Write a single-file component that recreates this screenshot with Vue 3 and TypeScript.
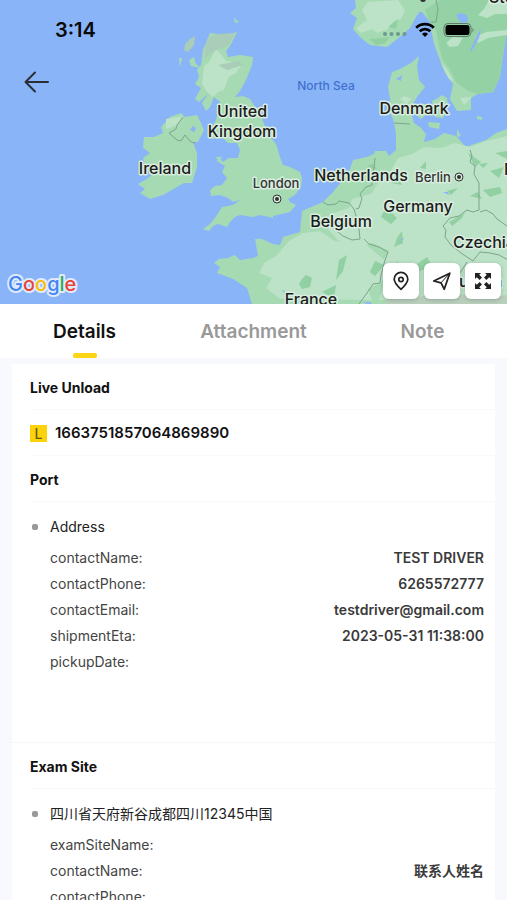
<script setup lang="ts">
import { ref } from 'vue'

interface Field {
  label: string
  value?: string
}
interface Stop {
  title: string
  address: string
  fields: Field[]
}
interface MapLabel {
  text: string
  x: number
  y: number
  kind?: string
}

const tabs = ['Details', 'Attachment', 'Note']
const active = ref('Details')

const stops: Stop[] = [
  {
    title: 'Port',
    address: 'Address',
    fields: [
      { label: 'contactName:', value: 'TEST DRIVER' },
      { label: 'contactPhone:', value: '6265572777' },
      { label: 'contactEmail:', value: 'testdriver@gmail.com' },
      { label: 'shipmentEta:', value: '2023-05-31 11:38:00' },
      { label: 'pickupDate:' },
    ],
  },
  {
    title: 'Exam Site',
    address: '四川省天府新谷成都四川12345中国',
    fields: [
      { label: 'examSiteName:' },
      { label: 'contactName:', value: '联系人姓名' },
      { label: 'contactPhone:' },
    ],
  },
]

const labels: MapLabel[] = [
  { text: 'United', x: 242, y: 117 },
  { text: 'Kingdom', x: 242, y: 137 },
  { text: 'Ireland', x: 165, y: 174 },
  { text: 'Denmark', x: 414, y: 114 },
  { text: 'Netherlands', x: 361, y: 181 },
  { text: 'Germany', x: 418, y: 212 },
  { text: 'Belgium', x: 341, y: 227 },
  { text: 'Czechia', x: 484, y: 248 },
  { text: 'France', x: 311, y: 305 },
  { text: 'Austria', x: 475, y: 287 },
  { text: 'Poland', x: 504, y: 175, kind: 'edge' },
  { text: 'Stockholm', x: 489, y: 3, kind: 'edge' },
  { text: 'London', x: 276, y: 188, kind: 'city' },
  { text: 'Berlin', x: 433, y: 182, kind: 'city' },
  { text: 'North Sea', x: 326, y: 90, kind: 'sea' },
]

const cities = [
  { x: 277, y: 199 },
  { x: 459, y: 177 },
]
</script>

<template>
  <main class="screen">
    <header class="map">
      <svg class="map-art" viewBox="0 0 507 304" preserveAspectRatio="xMidYMid slice" role="img" aria-label="Map">
        <rect width="507" height="304" fill="#8ab4f8" />
        <g fill="#a5dab3">
          <path d="M210 33L226 35L237 32L230 46L226 51L228 57L240 55L253 57L252 65L246 80L240 91L235 97L243 96L250 99L256 108L260 113L264 124L270 137L276 144L280 157L283 165L290 167L300 172L302 178L301 187L295 195L288 199L290 202L296 205L290 212L273 216L273 218L260 215L253 217L240 215L235 217L230 222L227 227L218 224L213 226L209 231L203 229L210 224L217 215L222 207L233 205L240 200L233 202L228 198L220 195L211 196L210 190L215 186L222 185L227 178L222 172L225 166L217 161L219 158L223 162L229 158L238 158L240 150L237 143L228 143L222 137L212 139L209 132L216 120L220 102L214 97L210 107L206 111L202 103L208 94L199 102L195 99L201 88L195 84L199 77L197 70L201 65L203 50Z" />
          <path d="M170 117L181 113L185 117L197 115L201 123L204 130L198 142L193 142L197 153L197 167L192 183L184 183L177 187L163 195L150 199L140 193L145 189L138 184L147 179L154 173L145 166L143 158L150 153L143 148L144 137L154 137L163 133L161 127Z" />
          <path d="M189 60L194 57L196 64L201 68L191 66ZM234 18L239 22L235 23ZM179 58L182 58L180 67ZM216 157L222 157L219 162Z" />
          <path d="M355 0L507 0L507 31L502 62L500 77L493 92L478 94L471 98L471 110L457 111L450 99L453 84L445 73L441 63L434 44L430 24L422 12L417 15L410 28L401 36L387 47L370 45L361 38L353 29L357 18L350 13L356 8Z" />
          <path d="M419 56L417 66L419 80L425 87L417 97L413 104L411 113L414 123L420 127L426 134L424 142L435 139L444 133L456 136L466 147L474 144L486 140L496 133L507 129V304H252L247 288L233 279L217 273L220 267L214 263L219 259L228 258L235 255L240 260L253 258L258 256L255 239L262 239L273 244L280 245L283 237L300 232L302 211L323 202L333 192L342 181L350 169L353 160L367 157L374 154L375 151L386 151L389 156L396 150L396 134L394 122L390 112L390 99L388 87L392 72L400 69L411 63Z" />
          <path d="M432 101L438 98L442 95L447 98L448 106L443 118L435 117ZM414 105L425 104L428 113L421 119L414 113ZM428 122L440 123L439 129L429 127ZM477 116L482 117L482 120L477 119ZM457 129L461 136L457 137Z" />
        </g>
        <g fill="#bce2c7">
          <path d="M204 66L209 62L216 49L221 54L226 61L233 62L241 66L236 73L229 77L224 90L218 92L213 97L207 92L202 84ZM166 119L183 116L177 125L166 129Z" />
          <path d="M368 2L398 0L405 10L401 19L393 22L388 29L377 33L372 29L361 33L356 28L367 20L362 10ZM404 96L412 99L406 104L400 99Z" />
          <path d="M398 158L412 154L424 147L441 148L455 143L470 147L486 141L507 136V300H379L385 280L378 268L389 251L372 243L352 248L338 240L325 226L330 214L349 208L352 199L371 194L378 183L390 172ZM289 241L303 233L320 231L335 241L364 243L387 262L382 282L368 289L372 300L280 299L266 288L272 278L259 273L265 262L276 256Z" />
        </g>
        <path d="M440 0L507 0L507 31L502 62L500 77L493 92L478 94L468 91L456 82L449 68L443 61L439 46L436 30L429 21L425 10L434 4Z" fill="#94d2a5" />
        <g fill="#bce2c7">
          <path d="M489 0L507 0V14L495 14L487 18L478 15L484 9ZM475 37L486 32L507 30V35L488 38L478 43ZM446 43L453 37L463 38L458 46L450 47ZM441 63L447 69L454 82L449 79Z" />
          <path d="M460 98L472 97L464 105Z" />
        </g>
        <g fill="#91d0a3">
          <path d="M369 39L390 37L385 43L376 45ZM388 27L398 19L396 29Z" />
          <path d="M302 279L306 275L312 278L310 287L302 289L299 284ZM375 261L384 265L375 276L370 272ZM384 211L390 211L397 218L391 224L381 217ZM397 238L402 231L403 243L394 247ZM420 168L426 161L426 169ZM479 164L488 163L483 168ZM449 222L465 213L461 219L452 226ZM468 153L481 162L475 167ZM483 190L500 187L502 193L490 197ZM336 280L339 260L347 255L343 271Z" />
          <path d="M495 153L507 151V159ZM490 171L504 167L499 178ZM391 183L399 180L402 185ZM366 168L372 163L377 169ZM447 191L458 188L451 195ZM417 264L427 257L433 267L419 271ZM470 196L478 192L482 199ZM464 270L482 276L480 284ZM386 283L398 260L396 284ZM322 292L336 285L334 298Z" />
        </g>
        <path d="M207 39L217 34L235 33L229 45L214 51L204 59ZM218 65L239 61L243 65L227 70ZM185 44L190 39L195 36L194 45L188 52L184 50Z" fill="#a9cdb8" />
        <path d="M386 300L392 296L399 295L419 297L447 291L480 299L507 295V304H385Z" fill="#b9cfbc" />
        <g fill="#8ab4f8">
          <path d="M190 130l3-4 3 2-2 4zM396 79l6-4-1 6zM470 50l8-17 3-4-2 9-8 14zM456 15l4-2 7 2 1 7-7 1zM503 79l4-12v8l-5 14zM443 192l5 0 1 3zM401 240l3-3-1 3zM363 302l7 0 2 2-5 0zM281 289l4 3 0 2zM418 12l4 0 8 10 3 8-8-4z" />
        </g>
        <g fill="none" stroke="#7da58b" stroke-width="1">
          <path d="M183 117l-6 8-1 4-7 4 8 7 4 1 4-6 6 7 4 1M436 0l2 9-2 13-5 0M394 123l16 1M375 158l-1 10 -2 17-6 2-6 7 2 4-3 10-3 1M323 202l5 3 8-1 3-3 10 2 5 6 2 7-2 4 5 9 1 10-8 1-9-4-10-8-3-6-6-2M364 239l5 5 10 3 9 5-3 8-4 15-1 8-7 1-6 9-8 11M470 150l2 6-2 6 5 4-1 8 5 9 0 15 0 12-6 2-6-2-8 6-9 2-7 8 3 4-1 7 6 8 10 8 12 8 7-9 10 1 9 2 11 6M480 212l6-2 7 4 4 5 10 7M467 262l-5 8-7 10-15 2" />
        </g>
        <circle cx="423" cy="-1" r="3" fill="#333" />
        <g v-for="city in cities" :key="city.x">
          <circle :cx="city.x" :cy="city.y" r="4" fill="#d8ecdd" stroke="#333" />
          <circle :cx="city.x" :cy="city.y" r="2" fill="#333" />
        </g>
        <text
          v-for="label in labels"
          :key="label.text"
          :x="label.x"
          :y="label.y"
          class="label"
          :class="label.kind"
        >{{ label.text }}</text>
        <text class="google" x="8" y="291"><tspan fill="#4285f4">G</tspan><tspan fill="#ea4335">o</tspan><tspan fill="#fbbc04">o</tspan><tspan fill="#4285f4">g</tspan><tspan fill="#34a853">l</tspan><tspan fill="#ea4335">e</tspan></text>
      </svg>

      <div class="overlay">
        <div class="status">
          <span class="time">3:14</span>
          <span class="signals">
            <svg width="24" height="16" viewBox="0 0 24 16" fill="#6a9a92" aria-hidden="true">
              <circle cx="2" cy="12" r="2" /><circle cx="8.500" cy="12" r="2" /><circle cx="15" cy="12" r="2" /><circle cx="21.500" cy="12" r="2" />
            </svg>
            <svg width="20" height="16" viewBox="0 0 20 16" fill="none" stroke="#000" stroke-width="2.700" aria-hidden="true">
              <path d="M1.200 5.800a12.400 12.400 0 0 1 17.600 0M4.700 9.300a7.500 7.500 0 0 1 10.600 0" />
              <path d="M10 15L7 12a4.300 4.300 0 0 1 6 0z" fill="#000" stroke="none" />
            </svg>
            <svg width="32" height="16" viewBox="0 0 32 16" aria-hidden="true">
              <rect x="1" y="1.500" width="27" height="13" rx="4" fill="none" stroke="#5d7b68" />
              <rect x="2.500" y="3" width="24" height="10" rx="2.500" fill="#000" />
              <path d="M29.500 6v4a2.400 2.400 0 0 0 0-4" fill="#5d7b68" />
            </svg>
          </span>
        </div>
        <button class="back" type="button" aria-label="Back">
          <svg width="26" height="24" viewBox="0 0 26 24" fill="none" stroke="#2b2e33" stroke-width="2" stroke-linecap="round" stroke-linejoin="round">
            <path d="M24 12H1.500M11 2.500L1.500 12l9.500 9.500" />
          </svg>
        </button>
        <div class="tools">
          <button type="button" aria-label="Show stop">
            <svg width="20" height="20" viewBox="0 0 20 20" fill="none" stroke="#222" stroke-width="1.700" stroke-linejoin="round">
              <path d="M10 18.300C6.800 15.300 3.200 12 3.200 8.200a6.800 6.800 0 0 1 13.600 0c0 3.800-3.600 7.100-6.800 10.100z" />
              <circle cx="10" cy="8.500" r="2.200" />
            </svg>
          </button>
          <button type="button" aria-label="Navigate">
            <svg width="20" height="20" viewBox="0 0 20 20" fill="none" stroke="#222" stroke-width="1.800" stroke-linejoin="round">
              <path d="M17.800 2.200L1.800 10l7.200 1.800 3.200 6.400z" />
              <path d="M9 11.800L17.800 2.200" stroke-width="1" />
            </svg>
          </button>
          <button type="button" aria-label="Full screen">
            <svg width="20" height="20" viewBox="0 0 20 20" fill="#222">
              <path d="M2 2h6L6.200 3.800 9 6.600 6.600 9 3.800 6.200 2 8zM18 2v6l-1.800-1.800L13.400 9 11 6.600l2.800-2.800L12 2zM2 18v-6l1.800 1.800L6.600 11 9 13.400l-2.800 2.800L8 18zM18 18h-6l1.800-1.800L11 13.400l2.400-2.400 2.800 2.800L18 12z" />
            </svg>
          </button>
        </div>
      </div>
    </header>

    <nav class="tabs" role="tablist">
      <button
        v-for="tab in tabs"
        :key="tab"
        type="button"
        role="tab"
        class="tab"
        :class="{ active: tab === active }"
        :aria-selected="tab === active"
        @click="active = tab"
      >{{ tab }}</button>
    </nav>

    <div class="content">
      <article class="card">
        <h2 class="heading">Live Unload</h2>
        <div class="order">
          <span class="tag">L</span>
          <span>1663751857064869890</span>
        </div>
        <section v-for="stop in stops" :key="stop.title" class="stop">
          <h2 class="heading">{{ stop.title }}</h2>
          <div class="body">
            <h3 class="address">{{ stop.address }}</h3>
            <dl class="fields">
              <div v-for="field in stop.fields" :key="field.label" class="field">
                <dt>{{ field.label }}</dt>
                <dd>{{ field.value }}</dd>
              </div>
            </dl>
          </div>
        </section>
      </article>
    </div>
  </main>
</template>

<style>
body {
  margin: 0;
  background: #f8f9fd;
}
</style>

<style scoped>
* {
  box-sizing: border-box;
}
.screen {
  display: flex;
  flex-direction: column;
  height: 100vh;
  font-family: Inter, "Noto Sans CJK SC", sans-serif;
  font-size: 14px;
  color: #333;
}
button {
  border: 0;
  padding: 0;
  font: inherit;
  cursor: pointer;
}
svg {
  display: block;
}
.map {
  position: relative;
  flex: none;
  display: flex;
  height: 304px;
  overflow: hidden;
}
.map-art {
  position: absolute;
  inset: 0;
  width: 100%;
  height: 100%;
}
.label {
  font-size: 16px;
  font-weight: 500;
  fill: #1c1c1c;
  text-anchor: middle;
  stroke: #d9eedf;
  stroke-width: 3px;
  stroke-linejoin: round;
  paint-order: stroke;
}
.label.edge {
  text-anchor: start;
}
.label.city {
  font-size: 13px;
  fill: #333;
}
.label.sea {
  font-size: 12px;
  fill: #3f72cf;
  stroke: none;
}
.google {
  font-size: 20px;
  font-weight: 500;
  stroke: #dfeafd;
  stroke-width: 4px;
  stroke-linejoin: round;
  paint-order: stroke;
}
.overlay {
  position: relative;
  flex: 1;
  display: flex;
  flex-direction: column;
  align-items: flex-start;
  padding: 18px 6px 5px 24px;
}
.status {
  display: flex;
  align-items: center;
  justify-content: space-between;
  align-self: stretch;
  height: 24px;
  padding: 0 26px 0 31px;
}
.time {
  font-size: 20px;
  font-weight: 600;
  color: #0a0a0a;
}
.signals {
  display: flex;
  align-items: center;
  gap: 8px;
}
.back {
  margin-top: 28px;
  background: none;
}
.tools {
  display: flex;
  gap: 5px;
  margin-top: auto;
  align-self: flex-end;
}
.tools button {
  display: grid;
  place-items: center;
  width: 36px;
  height: 36px;
  border-radius: 6px;
  background: #fff;
  box-shadow: 0 1px 4px rgba(0, 0, 0, 0.2);
}
.tabs {
  flex: none;
  display: grid;
  grid-template-columns: repeat(3, 1fr);
  height: 54px;
  background: #fff;
}
.tab {
  display: flex;
  flex-direction: column;
  align-items: center;
  justify-content: space-between;
  padding-top: 16px;
  background: none;
  font-size: 19px;
  font-weight: 600;
  line-height: 24px;
  color: #999;
}
.tab.active {
  color: #111;
}
.tab.active::after {
  content: "";
  width: 24px;
  height: 5px;
  border-radius: 2px;
  background: #fcd514;
}
.content {
  flex: 1;
  min-height: 0;
  padding: 6px 12px 0;
  overflow-y: auto;
  scrollbar-width: none;
}
.card {
  background: #fff;
}
.heading,
.order {
  height: 46px;
  margin: 0 0 0 18px;
  border-bottom: 1px solid #f9f9fa;
  font-size: 14px;
  font-weight: 700;
  line-height: 48px;
  color: #111;
}
.order {
  display: flex;
  align-items: center;
  gap: 8px;
  padding-top: 1px;
  font-size: 15px;
  font-weight: 600;
}
.tag {
  width: 17px;
  height: 17px;
  background: #fcd20a;
  font-size: 14px;
  font-weight: 500;
  line-height: 17px;
  text-align: center;
  color: #665a14;
}
.stop + .stop {
  margin-top: 67px;
  border-top: 1px solid #f6f6f8;
}
.body {
  padding: 13px 11px 0 18px;
}
.address {
  display: flex;
  align-items: center;
  gap: 12px;
  margin: 0;
  font-size: 14px;
  font-weight: 400;
  line-height: 24px;
  color: #222;
}
.address::before {
  content: "";
  width: 6px;
  height: 6px;
  margin-left: 2px;
  border-radius: 2px;
  background: #999;
}
.fields {
  margin: 6px 0 0 20px;
}
.field {
  display: flex;
  justify-content: space-between;
  line-height: 26px;
}
dt {
  color: #444;
}
dd {
  margin: 0;
  font-weight: 600;
  color: #3a3a3a;
}
</style>
